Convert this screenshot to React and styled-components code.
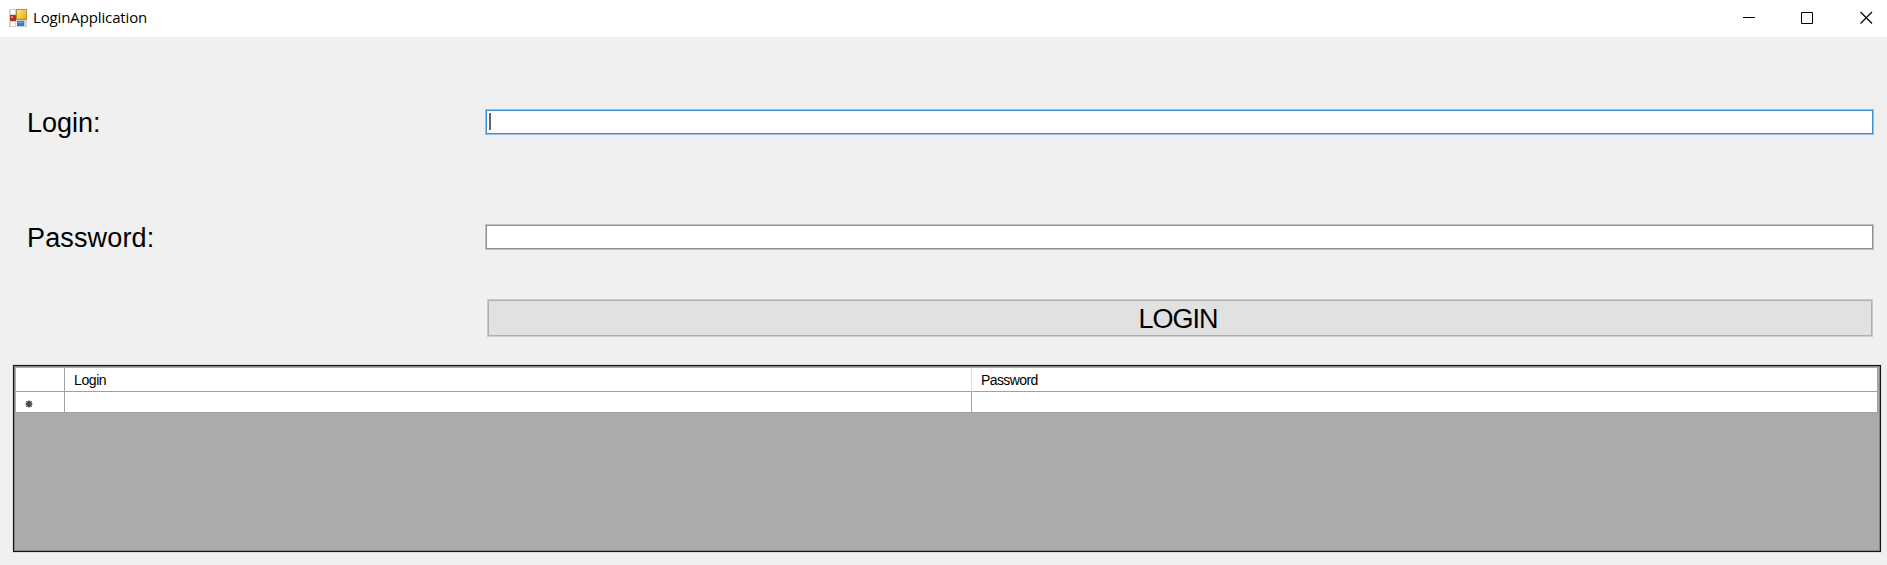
import React from 'react';
import styled, { createGlobalStyle } from 'styled-components';

const GlobalStyle = createGlobalStyle`
  * { box-sizing: border-box; }
  body { margin: 0; background: #f0f0f0; color: #000; font-family: "Liberation Sans", Arial, sans-serif; }
`;

const Window = styled.main`
  width: 1887px;
  height: 565px;
  display: flex;
  flex-direction: column;
  background: #f0f0f0;
  overflow: hidden;
`;

const TitleBar = styled.header`
  height: 37px;
  flex: none;
  display: flex;
  align-items: center;
  justify-content: space-between;
  background: #fff;
  padding: 0 14px 2px 9px;
`;

const Caption = styled.div`
  display: flex;
  align-items: center;
  gap: 6px;
  font-family: "Open Sans", sans-serif;
  font-size: 15px;
  line-height: 20px;
  letter-spacing: -0.13px;
`;

const CaptionText = styled.span`
  padding-bottom: 2px;
`;

const WindowControls = styled.div`
  display: flex;
  gap: 46px;
`;

const Form = styled.form`
  flex: none;
  height: 328px;
  padding: 72px 13px 0 27px;
`;

const Field = styled.label`
  display: grid;
  grid-template-columns: 458px 1389px;
  height: 26px;
  margin-bottom: ${({ $gap }) => $gap}px;
`;

const FieldName = styled.span`
  font-size: 27px;
  line-height: 26px;
  padding-top: 1px;
  letter-spacing: ${({ $tracking }) => $tracking}px;
  white-space: nowrap;
`;

const TextBox = styled.span`
  height: 26px;
  display: flex;
  background: #fff;
  border: 1px solid ${({ $focused }) => ($focused ? '#94c0e6' : '#c0c0c0')};
  box-shadow: inset 0 0 0 1px ${({ $focused }) => ($focused ? '#3d90d8' : '#8f8f8f')};
  padding: 3px 0 0 3px;
`;

const Caret = styled.span`
  width: 2px;
  height: 17px;
  background: #626262;
`;

const LoginButton = styled.button`
  display: block;
  width: 1386px;
  height: 38px;
  margin: 0 0 0 460px;
  padding: 3px 4px 0 0;
  border: 1px solid #cbcbcb;
  box-shadow: inset 0 0 0 1px #afafaf;
  background: #e1e1e1;
  color: #000;
  font: 27px "Liberation Sans", Arial, sans-serif;
  letter-spacing: -1px;
`;

const Grid = styled.section`
  width: 1868px;
  height: 187px;
  margin-left: 13px;
  border: 1px solid #161616;
  box-shadow: inset 0 0 0 1px #858585, 0 0 0 1px #dedede;
  background: #ababab;
  padding: 2px;
`;

const GridRow = styled.div`
  display: grid;
  grid-template-columns: 49px 907px 906px;
  height: ${({ $height }) => $height}px;
  background: #fff;
`;

const Cell = styled.div`
  display: flex;
  align-items: center;
  border-right: 1px solid ${({ $light }) => ($light ? '#dedede' : '#a0a0a0')};
  border-bottom: 1px solid #a0a0a0;
  padding: ${({ $marker }) => ($marker ? '4px 0 0 9px' : '0 0 0 9px')};
  font-size: 14px;
  line-height: 18px;
  letter-spacing: ${({ $tracking = 0 }) => $tracking}px;
`;

function AppIcon() {
  return (
    <svg width="18" height="18" viewBox="0 0 18 18">
      <defs>
        <linearGradient id="gold" x1="0" y1="0" x2="1" y2="1">
          <stop stopColor="#ffe89a" /><stop offset="1" stopColor="#e4a800" />
        </linearGradient>
      </defs>
      <rect width="18" height="18" fill="#d2d2d2" />
      <path d="M2 1h4v4H2zM2 13h4v4H2zM8 11h1v6H7v-4h1z" fill="#fff" />
      <rect x="7.5" y=".5" width="10" height="10" fill="url(#gold)" stroke="#b98b20" />
      <rect x="1" y="6" width="6" height="6" fill="#b42f2c" />
      <rect x="2" y="7" width="2" height="2" fill="#e18780" />
      <rect x="8" y="12" width="7" height="5" fill="#3975d4" />
      <path d="M9 13h5v1H9z" fill="#79aaf2" />
    </svg>
  );
}

function ControlIcon({ children }) {
  return (
    <svg width="13" height="13" viewBox="0 0 13 13" fill="none" stroke="#000" strokeWidth="1">
      {children}
    </svg>
  );
}

function NewRowMarker() {
  return (
    <svg width="8" height="8" viewBox="0 0 8 8">
      <path d="M4 0v8M.3 4h7.4M1 1l6 6M7 1L1 7" stroke="#6f6f6f" />
      <circle cx="4" cy="4" r="2.9" fill="#4b4b4b" />
    </svg>
  );
}

export default function App() {
  return (
    <Window>
      <GlobalStyle />
      <TitleBar>
        <Caption><AppIcon /><CaptionText>LoginApplication</CaptionText></Caption>
        <WindowControls>
          <ControlIcon><path d="M1 6.5h12" /></ControlIcon>
          <ControlIcon><path d="M.5 1.5h11v11H.5z" /></ControlIcon>
          <ControlIcon><path d="M.5 1l11.5 11.5M12 1L.5 12.5" strokeWidth="1.2" /></ControlIcon>
        </WindowControls>
      </TitleBar>
      <Form>
        <Field $gap={89}>
          <FieldName $tracking={0}>Login:</FieldName>
          <TextBox $focused><Caret /></TextBox>
        </Field>
        <Field $gap={49}>
          <FieldName $tracking={0.15}>Password:</FieldName>
          <TextBox />
        </Field>
        <LoginButton type="button">LOGIN</LoginButton>
      </Form>
      <Grid>
        <GridRow $height={24}>
          <Cell />
          <Cell $light $tracking={-0.4}>Login</Cell>
          <Cell $tracking={-0.6}>Password</Cell>
        </GridRow>
        <GridRow $height={21}>
          <Cell $marker><NewRowMarker /></Cell>
          <Cell />
          <Cell />
        </GridRow>
      </Grid>
    </Window>
  );
}
